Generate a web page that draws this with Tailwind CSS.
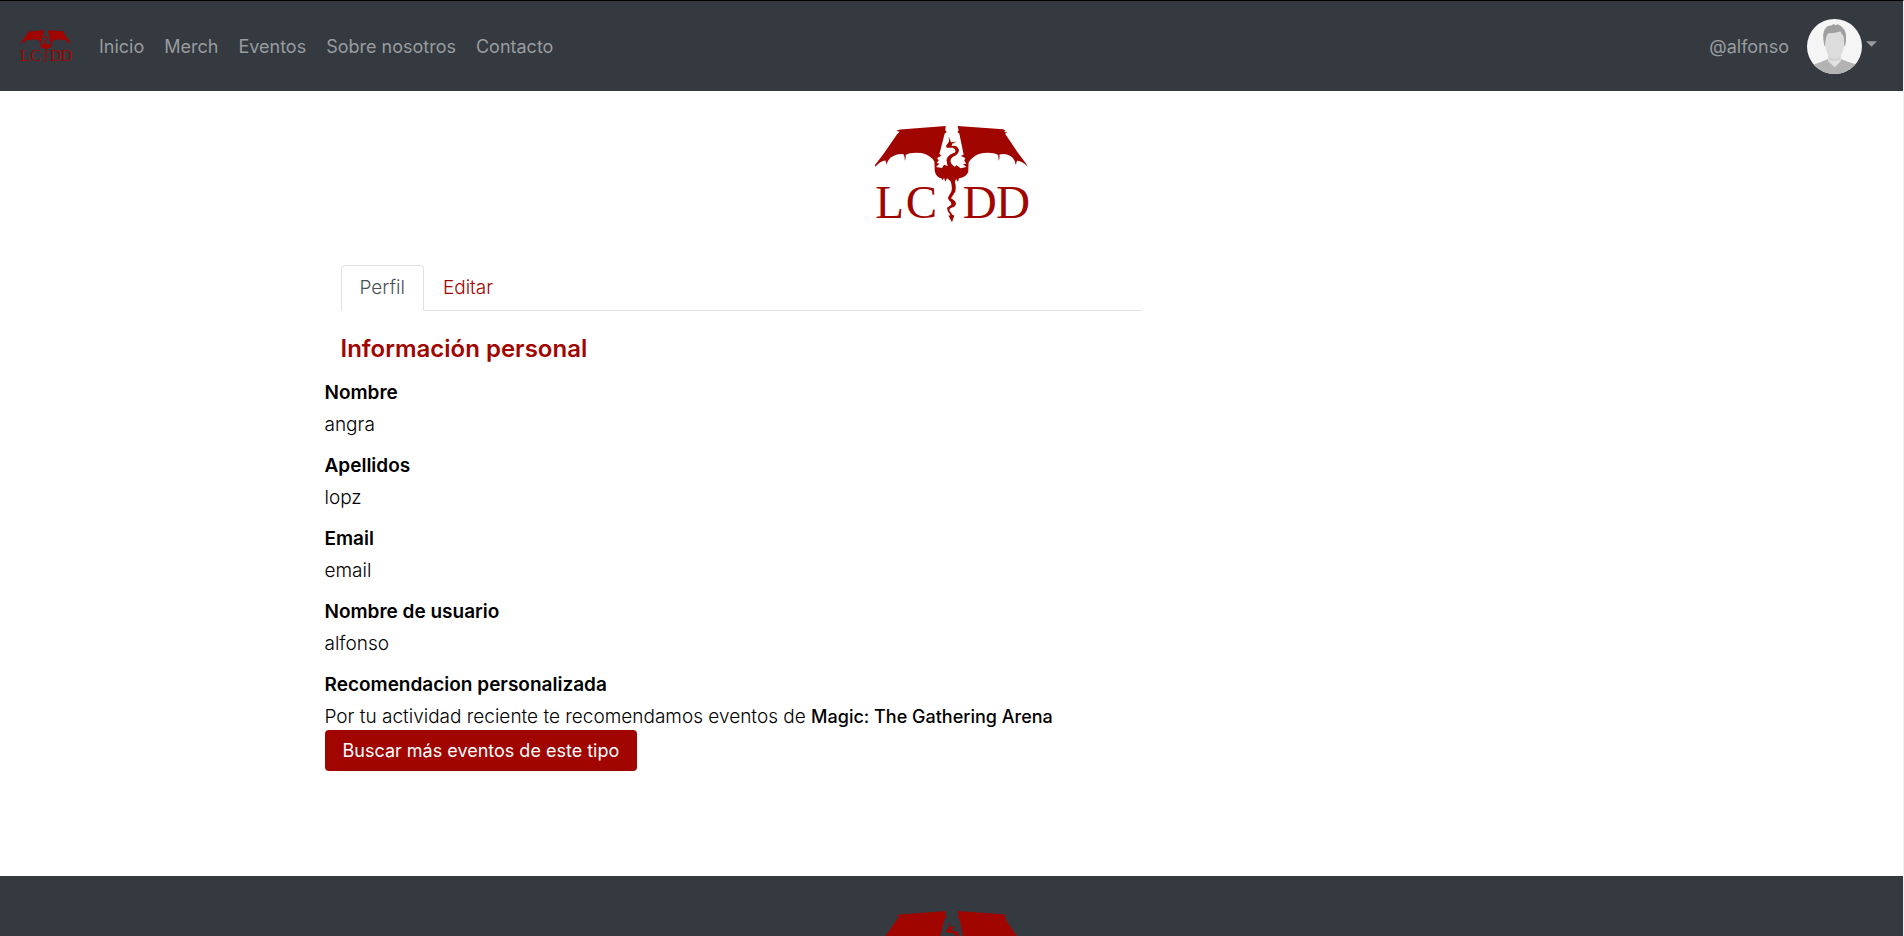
<!DOCTYPE html>
<html lang="es">
<head>
<meta charset="utf-8">
<meta name="viewport" content="width=device-width, initial-scale=1">
<title>LCIDD - Perfil</title>
<script src="https://cdn.jsdelivr.net/npm/@tailwindcss/browser@4"></script>
</head>
<body class="min-h-screen border-t border-r border-t-black border-r-[#f1f1f1] bg-white font-['Inter',sans-serif] text-[18px] font-light text-black">

<!-- Shared logo artwork -->
<svg class="hidden" aria-hidden="true">
  <symbol id="logo" viewBox="42 46 464 294">
    <g fill="#a10500">
      <path d="M255 48 L118 59 L106 63 L116 66 L108 74 L68 132 L42 166 L43 171 Q58 153 73 152 Q77 158 76 166 Q80 153 88 144 Q108 130 127 133 Q133 143 131 154 Q136 145 134 136 Q150 126 182 130 Q210 136 221 156 L222 184 Q226 203 242 206 L245 212 L250 205 L254 216 L259 206 Q270 212 272 222 Q275 238 272 246 L262 264 Q261 270 271 278 L272 286 L260 294 Q258 304 266 312 L269 318 L263 318 L274 338 L281 318 L275 316 L266 302 L268 297 L283 290 Q290 280 280 272 L271 266 L284 246 Q287 232 283 218 L286 208 L292 216 L295 206 Q318 202 323 186 L324 158 Q340 134 368 130 Q398 127 413 136 L415 154 Q418 145 417 134 Q440 128 457 144 Q464 152 466 166 L470 153 Q487 154 502 171 L497 161 L472 128 L434 72 L440 68 L430 66 L436 63 L428 58 L291 48 L294 62 L290 67 L296 71 L309 134 L301 139 L314 145 L311 153 L317 162 L307 163 L317 172 L300 176 L288 167 L282 171 L274 164 Q264 152 276 142 Q295 134 295 121 Q290 105 273 109 L275 101 L288 96 L271 97 L264 80 L265 96 L256 108 L258 114 L276 114 Q288 118 283 128 Q262 135 258 148 Q257 158 261 169 L250 165 L244 175 L226 172 L236 162 L228 160 L234 152 L229 145 L242 138 L236 133 L252 71 L258 67 L254 61 Z"/>
    </g>
    <g fill="#a10500" class="font-['Liberation_Serif',serif] text-[142px] font-normal" text-anchor="middle">
      <text x="86" y="326">L</text>
      <text x="182" y="326">C</text>
      <text x="358" y="326">D</text>
      <text x="458" y="326">D</text>
    </g>
  </symbol>
</svg>

<header class="flex h-[90px] items-center bg-[#343a40] pr-[26px] pl-5 font-normal text-[#999c9f]">
  <a href="#" aria-label="LCIDD" class="mr-[27px]"><svg class="h-[33px] w-[52px]"><use href="#logo"/></svg></a>
  <nav class="flex gap-5">
    <a href="#">Inicio</a>
    <a href="#">Merch</a>
    <a href="#">Eventos</a>
    <a href="#">Sobre nosotros</a>
    <a href="#">Contacto</a>
  </nav>
  <button type="button" class="ml-auto flex items-center">
    <span class="mr-[18px]">@alfonso</span>
    <svg class="size-[55px] rounded-full" viewBox="0 0 165 165" aria-hidden="true">
      <rect width="165" height="165" fill="#f5f5f5"/>
      <path d="M14 165 L22 136 Q42 130 62 121 L104 121 Q124 130 146 136 L152 165 Z" fill="#b3b3b3"/>
      <path d="M64 108 H101 V122 L83 142 L64 122 Z" fill="#d0d0d0"/>
      <path d="M63 120 Q83 132 102 120 L102 126 L83 145 L63 126 Z" fill="#e2e2e2"/>
      <path d="M52 80 Q44 40 54 30 Q62 18 72 20 L80 15 L86 19 L92 16 Q104 20 108 28 Q122 36 115 80 Z" fill="#9f9f9f"/>
      <path d="M56 62 Q58 46 66 42 Q84 44 100 37 L105 46 Q112 50 111 72 Q114 76 110 88 Q104 118 83 121 Q62 118 56 88 Q52 76 56 62 Z" fill="#dcdcdc"/>
    </svg>
    <svg class="mb-1 ml-1 h-[6px] w-[11px]" viewBox="0 0 12 6" aria-hidden="true"><path d="M0 0H12L6 6Z" fill="#999c9f"/></svg>
  </button>
</header>

<main class="pb-[105px]">
  <svg class="mx-auto mt-[34px] h-[98px] w-[154px]" role="img" aria-label="LCIDD"><use href="#logo"/></svg>

  <div class="mt-[42px] ml-[17%] pl-px text-[19px]">
    <div class="ml-4 w-[50.8%] border-b border-[#dee2e6]">
      <div class="-mb-px flex">
        <a href="#" class="rounded-t border border-b-white border-[#dee2e6] px-[18px] py-[10px] leading-6 text-[#495057]">Perfil</a>
        <a href="#" class="border border-transparent px-[18px] py-[10px] leading-6 text-[#a10500]">Editar</a>
      </div>
    </div>
    <h1 class="mt-6 mb-[17px] ml-4 text-[24px] leading-7 font-semibold text-[#a10500]">Información personal</h1>
    <dl class="leading-[25px]">
      <dt class="mb-[7px] font-semibold">Nombre</dt>
      <dd class="mb-4">angra</dd>
      <dt class="mb-[7px] font-semibold">Apellidos</dt>
      <dd class="mb-4">lopz</dd>
      <dt class="mb-[7px] font-semibold">Email</dt>
      <dd class="mb-4">email</dd>
      <dt class="mb-[7px] font-semibold">Nombre de usuario</dt>
      <dd class="mb-4">alfonso</dd>
      <dt class="mb-[7px] font-semibold">Recomendacion personalizada</dt>
      <dd>Por tu actividad reciente te recomendamos eventos de <span class="text-[18px] font-medium">Magic: The Gathering Arena</span></dd>
    </dl>
    <button type="button" class="mt-px rounded bg-[#a10500] px-[18px] py-2 text-[18px] leading-[25px] font-normal text-white">Buscar más eventos de este tipo</button>
  </div>
</main>

<footer class="bg-[#343a40] py-[34px]">
  <svg class="mx-auto h-[98px] w-[154px]" role="img" aria-label="LCIDD"><use href="#logo"/></svg>
</footer>
</body>
</html>
